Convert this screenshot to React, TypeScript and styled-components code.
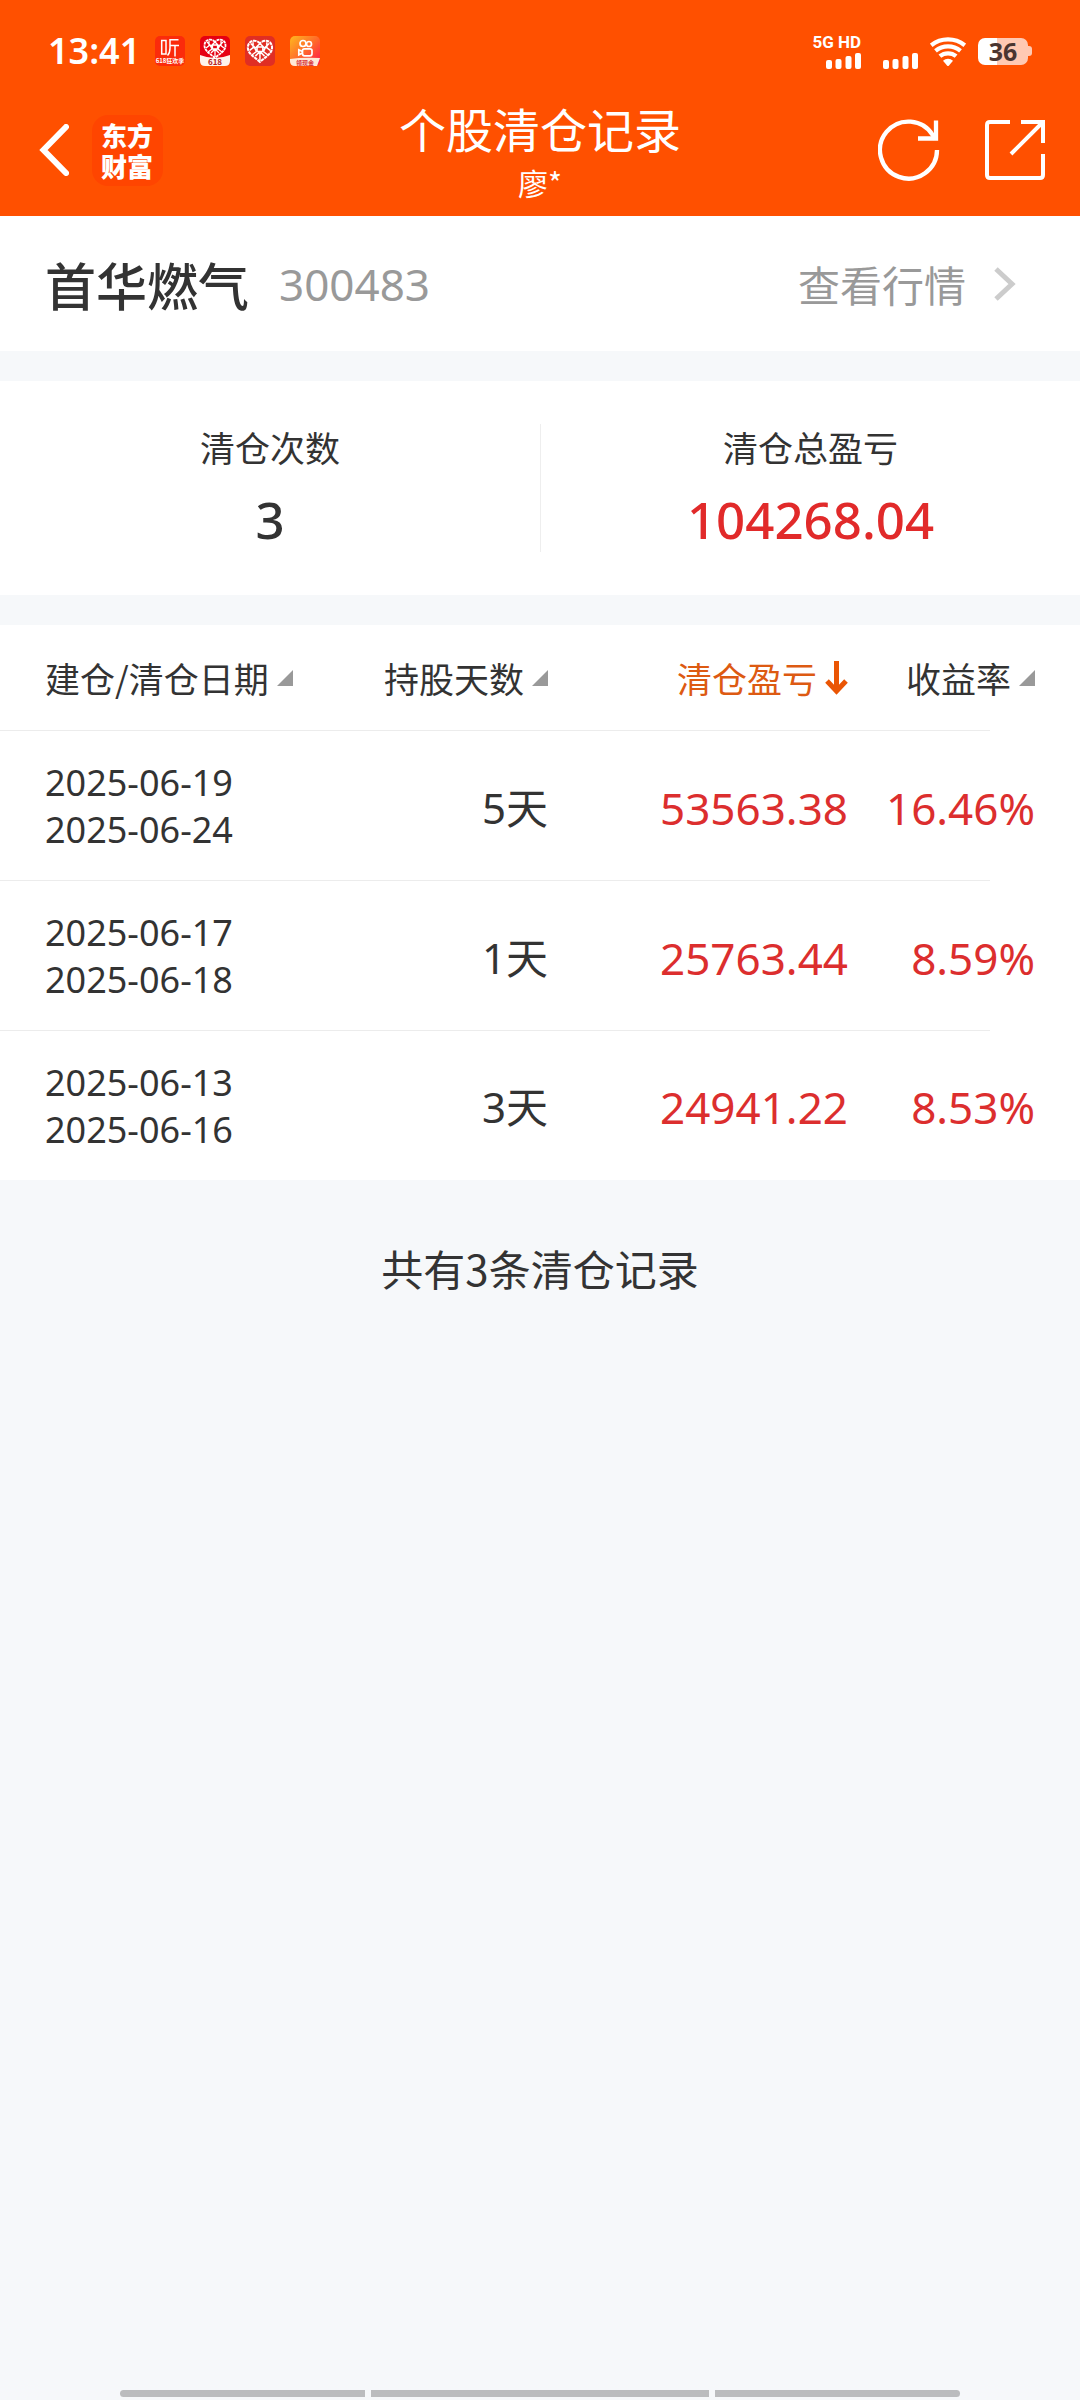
import React from "react";
import styled, { createGlobalStyle } from "styled-components";

const numerals = `"Noto Sans", "Noto Sans CJK SC", sans-serif`;

const GlobalStyle = createGlobalStyle`
  *, *::before, *::after { box-sizing: border-box; }
  body {
    margin: 0;
    background: #f6f8fa;
    color: #333;
    font-family: "Noto Sans CJK SC", "Noto Sans", sans-serif;
  }
  button { font: inherit; color: inherit; background: none; border: 0; padding: 0; cursor: pointer; }
  svg { display: block; flex: none; }
`;

const Page = styled.div`
  min-height: 100vh;
  display: flex;
  flex-direction: column;
`;

const Header = styled.header`
  background: #ff5000;
  color: #fff;
`;

const StatusBar = styled.div`
  height: 84px;
  padding: 18px 48px 0;
  display: flex;
  align-items: center;
  justify-content: space-between;
`;

const StatusGroup = styled.div<{ $gap: number; $align?: string }>`
  display: flex;
  align-items: ${(p) => p.$align ?? "center"};
  gap: ${(p) => p.$gap}px;
`;

const Clock = styled.time`
  font-family: ${numerals};
  font-size: 36px;
  line-height: 40px;
  font-weight: 600;
`;

const Sim = styled.div`
  display: flex;
  flex-direction: column;
  align-items: flex-end;
  gap: 3px;
`;

const NetworkLabel = styled.span`
  font: 700 17px/16px Roboto, sans-serif;
`;

const Battery = styled.div`
  display: flex;
  align-items: center;
`;

const BatteryBody = styled.div`
  width: 50px;
  height: 27px;
  border-radius: 7px;
  background: linear-gradient(to right, #fff 38%, #ffc9b3 38%);
  color: #4a3530;
  font-family: ${numerals};
  font-size: 25px;
  font-weight: 700;
  line-height: 27px;
  text-align: center;
`;

const BatteryTip = styled.span`
  width: 4px;
  height: 10px;
  border-radius: 0 3px 3px 0;
  background: #ffc9b3;
`;

const AppBar = styled.div`
  height: 132px;
  padding: 0 35px;
  display: grid;
  grid-template-columns: 1fr auto 1fr;
  align-items: center;
`;

const BarSide = styled.div<{ $end?: boolean; $gap: number }>`
  display: flex;
  align-items: center;
  justify-content: ${(p) => (p.$end ? "flex-end" : "flex-start")};
  gap: ${(p) => p.$gap}px;
`;

const Brand = styled.div`
  width: 71px;
  height: 71px;
  padding: 4px 9px 0;
  border-radius: 16px;
  background: #ff4500;
  font-size: 26px;
  font-weight: 900;
  line-height: 31px;
  word-break: break-all;
`;

const Titles = styled.div`
  display: flex;
  flex-direction: column;
  align-items: center;
  gap: 6px;
`;

const Title = styled.h1`
  margin: 0;
  font-size: 47px;
  font-weight: 400;
  line-height: 58px;
`;

const Account = styled.span`
  font-size: 30px;
  line-height: 38px;
`;

const StockRow = styled.section`
  height: 135px;
  padding: 0 64px 0 45px;
  background: #fff;
  display: flex;
  align-items: center;
  justify-content: space-between;
`;

const Stock = styled.div`
  display: flex;
  align-items: center;
  gap: 30px;
`;

const StockName = styled.h2`
  margin: 0;
  font-size: 51px;
  font-weight: 500;
  line-height: 60px;
`;

const StockCode = styled.span`
  font-family: ${numerals};
  font-size: 44px;
  line-height: 60px;
  color: #999;
`;

const QuoteLink = styled.a`
  display: flex;
  align-items: center;
  gap: 28px;
  font-size: 42px;
  line-height: 60px;
  color: #999;
  text-decoration: none;
`;

const Stats = styled.dl`
  margin: 30px 0;
  padding: 43px 0;
  background: #fff;
  display: grid;
  grid-template-columns: 1fr 1fr;
`;

const Stat = styled.div`
  height: 128px;
  display: flex;
  flex-direction: column;
  align-items: center;
  gap: 20px;
  & + & { border-left: 1px solid #eee; }
`;

const StatLabel = styled.dt`
  font-size: 35px;
  line-height: 46px;
`;

const StatValue = styled.dd<{ $gain?: boolean }>`
  margin: 0;
  font-family: ${numerals};
  font-size: 51px;
  font-weight: 500;
  line-height: 58px;
  color: ${(p) => (p.$gain ? "#e12a2a" : "#333")};
`;

const Records = styled.table`
  width: 100%;
  border-collapse: collapse;
  table-layout: fixed;
  background: #fff;
`;

const Row = styled.tr<{ $height: number; $last?: boolean }>`
  height: ${(p) => p.$height}px;
  background: ${(p) =>
    p.$last ? "none" : "linear-gradient(#ececec, #ececec) left bottom / calc(100% - 90px) 1px no-repeat"};
`;

const HeadCell = styled.th<{ $width?: number; $align?: string; $active?: boolean }>`
  width: ${(p) => (p.$width ? `${p.$width}px` : "auto")};
  padding: 0;
  font-size: 35px;
  font-weight: 400;
  line-height: 46px;
  text-align: ${(p) => p.$align ?? "right"};
  white-space: nowrap;
  color: ${(p) => (p.$active ? "#dd5a12" : "#333")};
  &:first-child { padding-left: 45px; }
  &:last-child { padding-right: 45px; }
`;

const SortButton = styled.button<{ $gap?: number }>`
  display: inline-flex;
  align-items: center;
  gap: 8px;
`;

const DateCell = styled.td`
  padding: 0 0 0 45px;
  font-family: ${numerals};
  font-size: 36px;
  line-height: 47px;
  white-space: pre-line;
`;

const ValueCell = styled.td<{ $gain?: boolean }>`
  padding: 3px 0 0;
  font-family: ${numerals};
  font-size: ${(p) => (p.$gain ? 44 : 42)}px;
  line-height: 60px;
  text-align: right;
  color: ${(p) => (p.$gain ? "#dc2e2e" : "#333")};
  &:last-child { padding-right: 45px; }
`;

const Summary = styled.p`
  margin: 58px 0;
  font-size: 42px;
  line-height: 60px;
  text-align: center;
`;

const NavBars = styled.footer`
  margin-top: auto;
  padding: 0 120px 3px;
  display: grid;
  grid-template-columns: 245fr 338fr 245fr;
  gap: 6px;
`;

const NavBar = styled.span`
  height: 7px;
  background: #bbbcbe;
  &:first-child { border-radius: 4px 0 0 4px; }
  &:last-child { border-radius: 0 4px 4px 0; }
`;

const TileText = styled.text`
  font-family: "Noto Sans CJK SC", sans-serif;
  text-anchor: middle;
`;

const ListenIcon = () => (
  <svg width="30" height="30" viewBox="0 0 30 30" aria-hidden="true">
    <rect width="30" height="30" rx="5" fill="#fb2b0b" />
    <path d="M6.7 4.5H11V18H6.7ZM23.500 3.800H15V12Q15 17 12.500 19.500M15 9.500H24M20 9.500V20.500" fill="none" stroke="#fff" strokeWidth="1.500" />
    <TileText x="15" y="27" fontSize="6" fontWeight="700" fill="#fff">618狂欢季</TileText>
  </svg>
);

const Heart = () => (
  <g fill="none" stroke="#fff">
    <path d="M15 6C12 2 4.500 3 4.500 9.500C4.500 15 10 17.500 15 22C20 17.500 25.500 15 25.500 9.500C25.500 3 18 2 15 6Z" strokeWidth="1.800" strokeDasharray="3 .6" />
    <path d="M7 6l4 4 4-4 4 4 4-4M6 12l4-3 2 4-4 3M24 12l-4-3-2 4 4 3M11 17l4-4 4 4M15 14v7M9 5v5M21 5v5M12.500 9h5v4h-5z" strokeWidth="1.300" />
  </g>
);

const HeartSaleIcon = () => (
  <svg width="30" height="30" viewBox="0 0 30 30" aria-hidden="true">
    <rect width="30" height="30" rx="5" fill="#e60012" />
    <path d="M0 19Q15 25 30 19V25Q30 30 25 30H5Q0 30 0 25Z" fill="#fff3ea" />
    <Heart />
    <TileText x="15" y="29" fontSize="8" fontWeight="700" fill="#b3201c">618</TileText>
  </svg>
);

const HeartIcon = () => (
  <svg width="30" height="30" viewBox="0 0 30 30" aria-hidden="true">
    <rect width="30" height="30" rx="5" fill="#e02e24" />
    <g transform="translate(-2.300 .6) scale(1.150)"><Heart /></g>
  </svg>
);

const CameraIcon = () => (
  <svg width="30" height="30" viewBox="0 0 30 30" aria-hidden="true">
    <defs>
      <linearGradient id="camera-tile" x1="0" y1="0" x2="1" y2="1">
        <stop offset="0" stopColor="#ffb81f" />
        <stop offset=".5" stopColor="#ff6a2b" />
        <stop offset="1" stopColor="#ff0f4d" />
      </linearGradient>
    </defs>
    <rect width="30" height="30" rx="5" fill="url(#camera-tile)" />
    <g fill="none" stroke="#fff" strokeWidth="1.700">
      <circle cx="13" cy="7.500" r="3" />
      <circle cx="19" cy="8" r="2.500" />
      <rect x="12.500" y="12.800" width="9.500" height="7" rx="2" />
      <path d="M12.500 15.500L8.800 13.800V18.800L12.500 17" />
    </g>
    <path d="M0 23Q12 21 30 22L27 30H5Q0 30 0 25Z" fill="#ffe9d6" />
    <TileText x="15" y="28.500" fontSize="6" fontWeight="700" fill="#d8343a">领现金</TileText>
  </svg>
);

const SignalBars = () => (
  <svg width="35" height="16" viewBox="0 0 35 16" fill="#fff" aria-hidden="true">
    <rect x="0" y="7" width="6" height="9" rx="2" />
    <rect x="9.500" y="6" width="6" height="10" rx="2" />
    <rect x="19.500" y="3" width="6" height="13" rx="2" />
    <rect x="29" y="0" width="6" height="16" rx="2" />
  </svg>
);

const WifiIcon = () => (
  <svg width="36" height="29" viewBox="0 0 36 29" fill="none" stroke="#fff" strokeWidth="4.300" aria-hidden="true">
    <path d="M1.200 8.300A26.700 26.700 0 0 1 34.800 8.300" />
    <path d="M5.500 13.800A19.700 19.700 0 0 1 30.500 13.800" />
    <path d="M9.900 19.200A12.700 12.700 0 0 1 26.100 19.200" />
    <path d="M17 28.500L13 23.700A7.500 7.500 0 0 1 23 23.700L19 28.500Q18 29.500 17 28.500Z" fill="#fff" stroke="none" />
  </svg>
);

const BackIcon = () => (
  <svg width="34" height="52" viewBox="-5 0 34 52" fill="none" stroke="#fff" strokeWidth="6" aria-hidden="true">
    <path d="M26 3L3.500 26L26 49" strokeLinecap="round" />
  </svg>
);

const RefreshIcon = () => (
  <svg width="62" height="62" viewBox="0 0 62 62" fill="none" stroke="#fff" strokeWidth="4.300" aria-hidden="true">
    <path d="M59 31A28.500 28.500 0 1 1 55 16.500L57.500 20" />
    <path d="M40 19.500H58V1.500" />
  </svg>
);

const ShareIcon = () => (
  <svg width="60" height="60" viewBox="0 0 60 60" fill="none" stroke="#fff" strokeWidth="4" aria-hidden="true">
    <path d="M25 2H5Q2 2 2 5V55Q2 58 5 58H55Q58 58 58 55V34" />
    <path d="M36 2H58V23M58 2L26 34" />
  </svg>
);

const ForwardIcon = () => (
  <svg width="22" height="34" viewBox="0 0 22 34" fill="none" stroke="#ccc" strokeWidth="5" aria-hidden="true">
    <path d="M2 2L18 17L2 32" />
  </svg>
);

const SortCorner = () => (
  <svg width="16" height="16" viewBox="0 0 16 16" aria-hidden="true">
    <path d="M16 0V16H0Z" fill="#999" />
  </svg>
);

const SortDown = () => (
  <svg width="23" height="34" viewBox="0 0 23 34" fill="none" stroke="#ea5504" strokeWidth="5" aria-hidden="true">
    <path d="M11.500 0V30M2 20L11.500 30L21 20" />
  </svg>
);

const records = [
  { opened: "2025-06-19", closed: "2025-06-24", days: 5, profit: "53563.38", rate: "16.46%" },
  { opened: "2025-06-17", closed: "2025-06-18", days: 1, profit: "25763.44", rate: "8.59%" },
  { opened: "2025-06-13", closed: "2025-06-16", days: 3, profit: "24941.22", rate: "8.53%" },
];

export default function App() {
  return (
    <Page>
      <GlobalStyle />
      <Header>
        <StatusBar>
          <StatusGroup $gap={15}>
            <Clock>13:41</Clock>
            <ListenIcon />
            <HeartSaleIcon />
            <HeartIcon />
            <CameraIcon />
          </StatusGroup>
          <StatusGroup $gap={12}>
            <StatusGroup $gap={22} $align="flex-end">
              <Sim>
                <NetworkLabel>5G HD</NetworkLabel>
                <SignalBars />
              </Sim>
              <SignalBars />
            </StatusGroup>
            <WifiIcon />
            <Battery>
              <BatteryBody>36</BatteryBody>
              <BatteryTip />
            </Battery>
          </StatusGroup>
        </StatusBar>
        <AppBar>
          <BarSide $gap={23}>
            <button type="button" aria-label="返回"><BackIcon /></button>
            <Brand>东方财富</Brand>
          </BarSide>
          <Titles>
            <Title>个股清仓记录</Title>
            <Account>廖*</Account>
          </Titles>
          <BarSide $end $gap={45}>
            <button type="button" aria-label="刷新"><RefreshIcon /></button>
            <button type="button" aria-label="分享"><ShareIcon /></button>
          </BarSide>
        </AppBar>
      </Header>

      <main>
        <StockRow>
          <Stock>
            <StockName>首华燃气</StockName>
            <StockCode>300483</StockCode>
          </Stock>
          <QuoteLink href="#quote">
            查看行情
            <ForwardIcon />
          </QuoteLink>
        </StockRow>

        <Stats>
          <Stat>
            <StatLabel>清仓次数</StatLabel>
            <StatValue>3</StatValue>
          </Stat>
          <Stat>
            <StatLabel>清仓总盈亏</StatLabel>
            <StatValue $gain>104268.04</StatValue>
          </Stat>
        </Stats>

        <Records>
          <thead>
            <Row $height={106}>
              <HeadCell $align="left" scope="col">
                <SortButton type="button">建仓/清仓日期<SortCorner /></SortButton>
              </HeadCell>
              <HeadCell $width={250} scope="col">
                <SortButton type="button">持股天数<SortCorner /></SortButton>
              </HeadCell>
              <HeadCell $width={300} $active scope="col" aria-sort="descending">
                <SortButton type="button">清仓盈亏<SortDown /></SortButton>
              </HeadCell>
              <HeadCell $width={232} scope="col">
                <SortButton type="button">收益率<SortCorner /></SortButton>
              </HeadCell>
            </Row>
          </thead>
          <tbody>
            {records.map((r, i) => {
              const last = i === records.length - 1;
              return (
                <Row key={r.opened} $height={last ? 149 : 150} $last={last}>
                  <DateCell>{`${r.opened}\n${r.closed}`}</DateCell>
                  <ValueCell>{`${r.days}天`}</ValueCell>
                  <ValueCell $gain>{r.profit}</ValueCell>
                  <ValueCell $gain>{r.rate}</ValueCell>
                </Row>
              );
            })}
          </tbody>
        </Records>

        <Summary>{`共有${records.length}条清仓记录`}</Summary>
      </main>

      <NavBars aria-hidden="true">
        <NavBar />
        <NavBar />
        <NavBar />
      </NavBars>
    </Page>
  );
}
